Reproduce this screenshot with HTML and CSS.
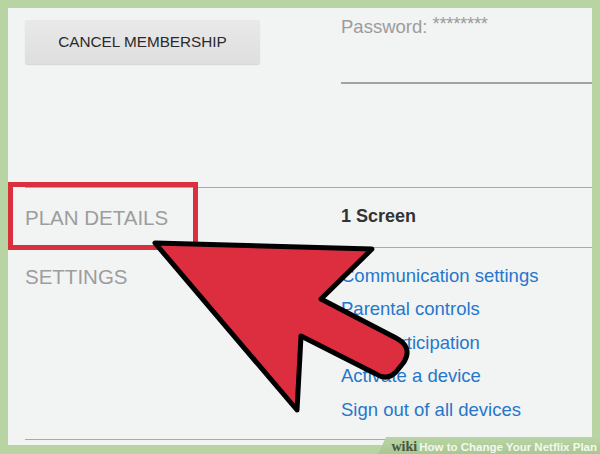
FILE: index.html
```html
<!DOCTYPE html>
<html lang="en">

<head>
    <meta charset="UTF-8" />
    <meta name="viewport" content="width=device-width, initial-scale=1.0" />
    <title>How to Change Your Netflix Plan</title>
    <link rel="stylesheet" href="styles.css">
</head>

<body>
    <div class="panel">
        <div class="row top">
            <div class="col-label">
                <button class="cancel">CANCEL MEMBERSHIP</button>
            </div>
            <div class="col-value">
                <div class="password">Password: <span class="stars">********</span></div>
                <div class="pw-line"></div>
            </div>
        </div>
        <div class="row plan">
            <div class="col-label label">PLAN DETAILS</div>
            <div class="col-value screens">1 Screen</div>
        </div>
        <div class="row settings">
            <div class="col-label label">SETTINGS</div>
            <ul class="col-value links">
                <li><a href="#">Communication settings</a></li>
                <li><a href="#">Parental controls</a></li>
                <li><a href="#">Test participation</a></li>
                <li><a href="#">Activate a device</a></li>
                <li><a href="#">Sign out of all devices</a></li>
            </ul>
        </div>
        <!-- highlight box around the plan label -->
        <div class="highlight"></div>
    </div>

    <!-- big pointer arrow drawn over the page -->
    <svg class="arrow" width="600" height="454" viewBox="0 0 600 454">
        <path d="M155,243 L372,249 L321,299 L396,338 Q413,347 404,362 L396,372 Q387,381 376,374 L301,336 L297,410 Z"
            fill="#dc2e3f" stroke="#000" stroke-width="5" stroke-linejoin="round" />
    </svg>

    <div class="watermark">
        <span class="wiki">wiki</span><span class="how">How to Change Your Netflix Plan</span>
    </div>
</body>

</html>
```

FILE: styles.css
```css
* {
    box-sizing: border-box;
    margin: 0;
    padding: 0;
}

body {
    position: relative;
    width: 600px;
    height: 454px;
    overflow: hidden;
    background: #b7d4a2;
    font-family: 'Liberation Sans', Arial, sans-serif;
    padding: 8px 8px 0;
}

.panel {
    position: relative;
    height: 437px;
    background: #f2f3f3;
    padding-left: 17px;
}

.row {
    display: grid;
    grid-template-columns: 316px 1fr;
    border-bottom: 1px solid #a9a9a9;
}

.row.top {
    height: 180px;
    align-items: start;
}

.cancel {
    margin-top: 12px;
    width: 235px;
    height: 44px;
    border: none;
    border-radius: 2px;
    background: linear-gradient(#e9e9e9, #dedede);
    box-shadow: 0 1px 1px rgba(0, 0, 0, 0.12);
    font-family: inherit;
    font-size: 15.3px;
    color: #2a2a2a;
    cursor: pointer;
}

.password {
    margin-top: 8px;
    font-size: 18.5px;
    line-height: 22px;
    color: #9c9c9c;
}

.stars {
    position: relative;
    top: -3px;
    font-size: 18.5px;
    letter-spacing: -0.3px;
}

.pw-line {
    margin-top: 44px;
    height: 2px;
    background: #a2a2a2;
}

.row.plan {
    height: 60px;
    align-items: center;
}

.label {
    font-size: 20.5px;
    color: #9d9d9d;
}

.screens {
    font-size: 18px;
    font-weight: bold;
    color: #333;
    padding-bottom: 3px;
}

.row.settings {
    height: 192px;
    align-items: start;
    padding-top: 11px;
}

.row.settings .label {
    line-height: 33.4px;
    padding-top: 1px;
}

.links {
    list-style: none;
}

.links li {
    font-size: 18.5px;
    line-height: 33.4px;
}

.links a {
    color: #2677cc;
    text-decoration: none;
}

.highlight {
    position: absolute;
    left: 0;
    top: 174px;
    width: 190px;
    height: 68px;
    border: 5px solid #d8303f;
}

.arrow {
    position: absolute;
    left: 0;
    top: 0;
}

.watermark {
    position: absolute;
    right: 0;
    bottom: 0;
    width: 222px;
    height: 17px;
    padding-right: 3px;
    text-align: right;
    line-height: 17px;
    background: linear-gradient(#b9d4a5, #a8c892);
    clip-path: polygon(8px 0, 100% 0, 100% 100%, 0 100%);
    white-space: nowrap;
}

.wiki {
    font-family: 'Liberation Serif', serif;
    font-weight: bold;
    font-size: 14px;
    color: #48553f;
    margin-right: 2px;
}

.how {
    font-weight: bold;
    font-size: 11.5px;
    color: #f4f8f0;
}
```
